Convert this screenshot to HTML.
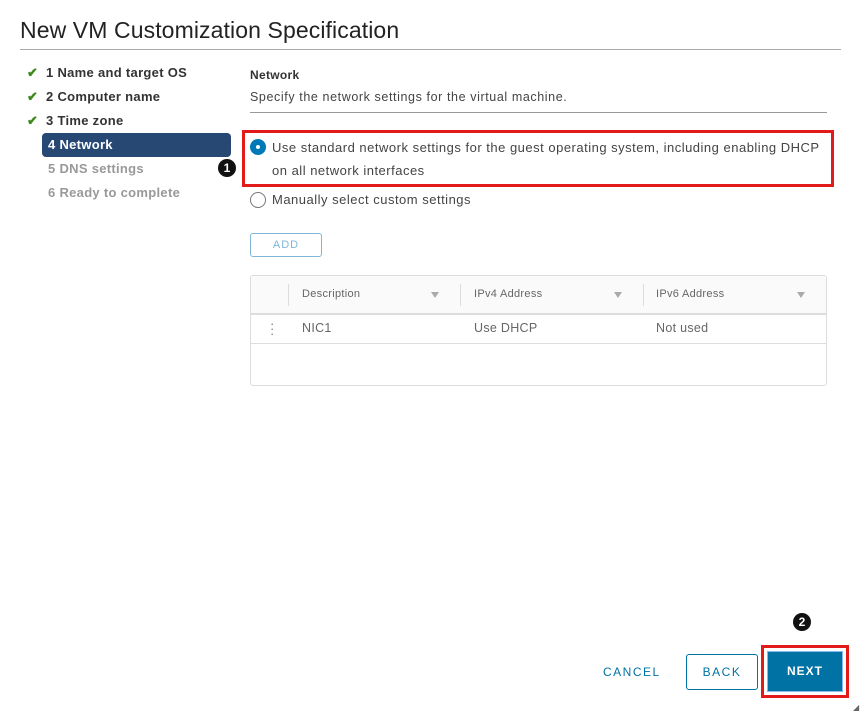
<!DOCTYPE html>
<html><head><style>
body{margin:0;width:862px;height:713px;background:#fff;font-family:"Liberation Sans",sans-serif;position:relative;overflow:hidden;color:#333}
.a{position:absolute}
.title{left:20px;top:17px;font-size:23px;color:#222;letter-spacing:0.1px}
.hr{left:20px;top:49px;width:821px;height:1px;background:#aaa}
.nav{font-size:13px;font-weight:bold;color:#333;letter-spacing:0.3px}
.chk{color:#3c8b1c;font-weight:bold}
.grey{color:#999}
.th{font-size:11px;color:#666;letter-spacing:0.3px}
.tri{width:0;height:0;border-left:4px solid transparent;border-right:4px solid transparent;border-top:6px solid #aaa}
.badge{width:18px;height:18px;border-radius:50%;background:#111;color:#fff;font-size:12px;font-weight:bold;text-align:center;line-height:18px}
</style></head><body>
<div class="a title">New VM Customization Specification</div>
<div class="a hr"></div>

<div class="a nav" style="left:27px;top:65px"><span class="chk">✔</span>&nbsp;&nbsp;1 Name and target OS</div>
<div class="a nav" style="left:27px;top:89px"><span class="chk">✔</span>&nbsp;&nbsp;2 Computer name</div>
<div class="a nav" style="left:27px;top:113px"><span class="chk">✔</span>&nbsp;&nbsp;3 Time zone</div>
<div class="a nav" style="left:42px;top:133px;width:189px;height:24px;background:#264873;border-radius:4px;color:#fff;line-height:24px;padding-left:6px;box-sizing:border-box">4 Network</div>
<div class="a nav grey" style="left:48px;top:161px">5 DNS settings</div>
<div class="a nav grey" style="left:48px;top:185px">6 Ready to complete</div>
<div class="a badge" style="left:218px;top:159px">1</div>

<div class="a" style="left:250px;top:68px;font-size:12px;font-weight:bold;color:#333;letter-spacing:0.3px">Network</div>
<div class="a" style="left:250px;top:90px;font-size:12.5px;color:#444;letter-spacing:0.6px">Specify the network settings for the virtual machine.</div>
<div class="a" style="left:250px;top:112px;width:577px;height:1px;background:#999"></div>

<div class="a" style="left:242px;top:130px;width:592px;height:57px;border:3px solid #e21a1a;box-sizing:border-box"></div>
<div class="a" style="left:250px;top:139px;width:16px;height:16px;border-radius:50%;background:#0079b8;box-sizing:border-box"></div>
<div class="a" style="left:256px;top:145px;width:4px;height:4px;border-radius:50%;background:#fff"></div>
<div class="a" style="left:272px;top:136px;font-size:13px;color:#444;line-height:23px;width:560px;letter-spacing:0.5px">Use standard network settings for the guest operating system, including enabling DHCP<br>on all network interfaces</div>
<div class="a" style="left:250px;top:192px;width:16px;height:16px;border-radius:50%;border:1px solid #777;box-sizing:border-box"></div>
<div class="a" style="left:272px;top:192px;font-size:13px;color:#444;letter-spacing:0.5px">Manually select custom settings</div>

<div class="a" style="left:250px;top:233px;width:72px;height:24px;border:1px solid #7fb7d8;border-radius:3px;box-sizing:border-box;font-size:11px;color:#7fb7d8;text-align:center;line-height:22px;letter-spacing:1px">ADD</div>

<div class="a" style="left:250px;top:275px;width:577px;height:111px;border:1px solid #ddd;border-radius:3px;box-sizing:border-box;overflow:hidden">
 <div class="a" style="left:0;top:0;width:577px;height:37px;background:#fafafa;border-bottom:2px solid #ddd"></div>
 <div class="a" style="left:37px;top:8px;width:1px;height:22px;background:#ddd"></div>
 <div class="a" style="left:209px;top:8px;width:1px;height:22px;background:#ddd"></div>
 <div class="a" style="left:392px;top:8px;width:1px;height:22px;background:#ddd"></div>
 <div class="a th" style="left:51px;top:12px">Description</div>
 <div class="a tri" style="left:180px;top:16px"></div>
 <div class="a th" style="left:223px;top:12px">IPv4 Address</div>
 <div class="a tri" style="left:363px;top:16px"></div>
 <div class="a th" style="left:405px;top:12px">IPv6 Address</div>
 <div class="a tri" style="left:546px;top:16px"></div>
 <div class="a" style="left:19px;top:45px;font-size:13px;color:#777;line-height:5px">·<br>·<br>·</div>
 <div class="a" style="left:51px;top:45px;font-size:12.5px;color:#666;letter-spacing:0.3px">NIC1</div>
 <div class="a" style="left:223px;top:45px;font-size:12.5px;color:#666;letter-spacing:0.3px">Use DHCP</div>
 <div class="a" style="left:405px;top:45px;font-size:12.5px;color:#666;letter-spacing:0.3px">Not used</div>
 <div class="a" style="left:0;top:67px;width:577px;height:1px;background:#ddd"></div>
</div>

<div class="a" style="left:603px;top:665px;font-size:12px;color:#0072a3;letter-spacing:1.5px">CANCEL</div>
<div class="a" style="left:686px;top:654px;width:72px;height:36px;border:1px solid #0072a3;border-radius:3px;box-sizing:border-box;font-size:12px;color:#0072a3;text-align:center;line-height:34px;letter-spacing:1.5px">BACK</div>
<div class="a" style="left:761px;top:645px;width:88px;height:53px;border:3px solid #e21a1a;box-sizing:border-box"></div>
<div class="a" style="left:767px;top:651px;width:76px;height:41px;background:#0072a3;border:1px solid #8ab8f0;box-sizing:border-box;font-size:12px;font-weight:bold;color:#fff;text-align:center;line-height:39px;letter-spacing:1px">NEXT</div>
<div class="a badge" style="left:793px;top:613px">2</div>
<div class="a" style="left:853px;top:703px;font-size:8px;color:#666">◢</div>
</body></html>
